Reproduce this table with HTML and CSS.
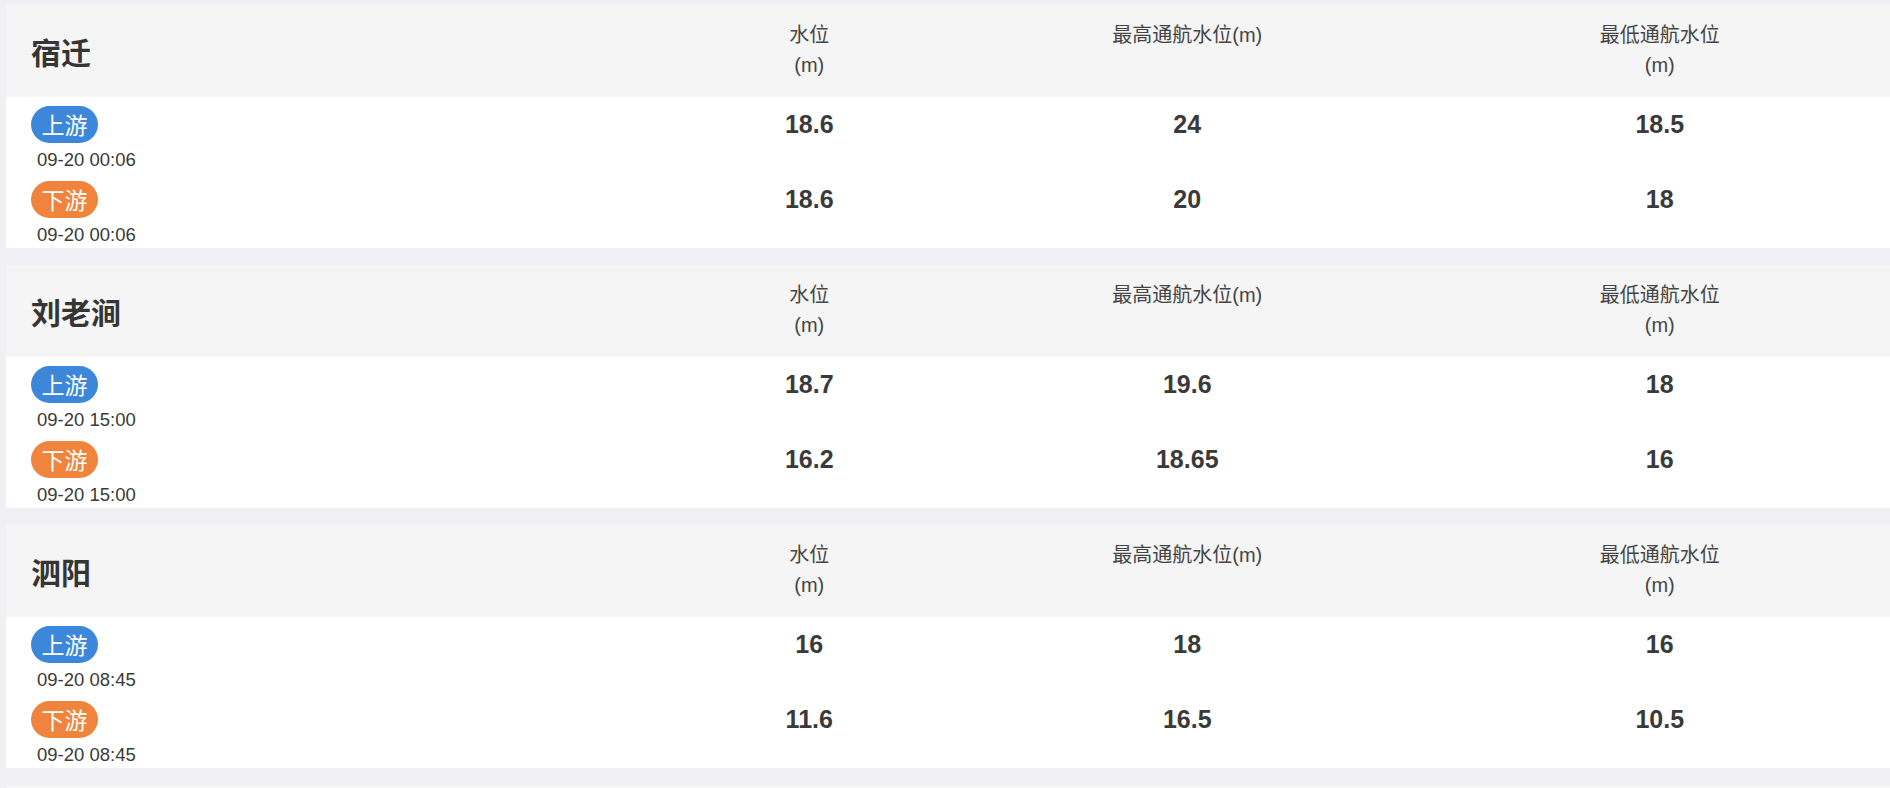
FILE: index.html
```html
<!DOCTYPE html>
<html lang="zh-CN">
<head>
<meta charset="utf-8">
<title>水位</title>
<link rel="stylesheet" href="styles.css">
</head>
<body>
<div class="list">
  <section class="card">
    <div class="head">
      <div class="title">宿迁</div>
      <div class="col">水位<br>(m)</div>
      <div class="col">最高通航水位(m)</div>
      <div class="col">最低通航水位<br>(m)</div>
    </div>
    <div class="body">
      <div class="row">
        <div class="side"><span class="badge up">上游</span><div class="time">09-20 00:06</div></div>
        <div class="num">18.6</div><div class="num">24</div><div class="num">18.5</div>
      </div>
      <div class="row">
        <div class="side"><span class="badge down">下游</span><div class="time">09-20 00:06</div></div>
        <div class="num">18.6</div><div class="num">20</div><div class="num">18</div>
      </div>
    </div>
  </section>
  <section class="card">
    <div class="head">
      <div class="title">刘老涧</div>
      <div class="col">水位<br>(m)</div>
      <div class="col">最高通航水位(m)</div>
      <div class="col">最低通航水位<br>(m)</div>
    </div>
    <div class="body">
      <div class="row">
        <div class="side"><span class="badge up">上游</span><div class="time">09-20 15:00</div></div>
        <div class="num">18.7</div><div class="num">19.6</div><div class="num">18</div>
      </div>
      <div class="row">
        <div class="side"><span class="badge down">下游</span><div class="time">09-20 15:00</div></div>
        <div class="num">16.2</div><div class="num">18.65</div><div class="num">16</div>
      </div>
    </div>
  </section>
  <section class="card">
    <div class="head">
      <div class="title">泗阳</div>
      <div class="col">水位<br>(m)</div>
      <div class="col">最高通航水位(m)</div>
      <div class="col">最低通航水位<br>(m)</div>
    </div>
    <div class="body">
      <div class="row">
        <div class="side"><span class="badge up">上游</span><div class="time">09-20 08:45</div></div>
        <div class="num">16</div><div class="num">18</div><div class="num">16</div>
      </div>
      <div class="row">
        <div class="side"><span class="badge down">下游</span><div class="time">09-20 08:45</div></div>
        <div class="num">11.6</div><div class="num">16.5</div><div class="num">10.5</div>
      </div>
    </div>
  </section>
  <section class="card">
    <div class="head"></div>
  </section>
</div>
</body>
</html>
```

FILE: styles.css
```css
html, body {
  margin: 0;
  padding: 0;
  overflow: hidden;
  background: #efeff4;
}
body {
  font-family: "Liberation Sans", "Noto Sans CJK SC", sans-serif;
  color: #3a3a3a;
}
.list {
  display: flex;
  flex-direction: column;
  gap: 17px;
  padding: 5px 0 0 6px;
  width: 1890px;
}
.card {
  width: 1890px;
  background: #fff;
}
.head, .row {
  display: grid;
  grid-template-columns: 35% 15% 25% 25%;
}
.head {
  height: 92px;
  background: #f5f5f5;
}
.title {
  align-self: center;
  padding-left: 25px;
  font-size: 30px;
  font-weight: bold;
  color: #353535;
  font-family: "Noto Sans CJK SC", sans-serif;
}
.col {
  padding-top: 15px;
  text-align: center;
  font-size: 20px;
  line-height: 30px;
  color: #454545;
}
.body {
  padding-bottom: 1px;
}
.row {
  height: 75px;
}
.side {
  padding: 9px 0 0 25px;
}
.badge {
  display: inline-block;
  width: 67px;
  height: 37px;
  line-height: 37px;
  border-radius: 19px;
  text-align: center;
  color: #fff;
  font-size: 23px;
  font-family: "Noto Sans CJK SC", sans-serif;
}
.badge.up { background: #3d87db; }
.badge.down { background: #f0843c; }
.time {
  margin-top: 4px;
  padding-left: 6px;
  font-size: 18.5px;
  line-height: 25px;
  color: #3a3a3a;
}
.num {
  margin-top: 9px;
  line-height: 37px;
  text-align: center;
  font-size: 25px;
  font-weight: bold;
  color: #3a3a3a;
}
```
